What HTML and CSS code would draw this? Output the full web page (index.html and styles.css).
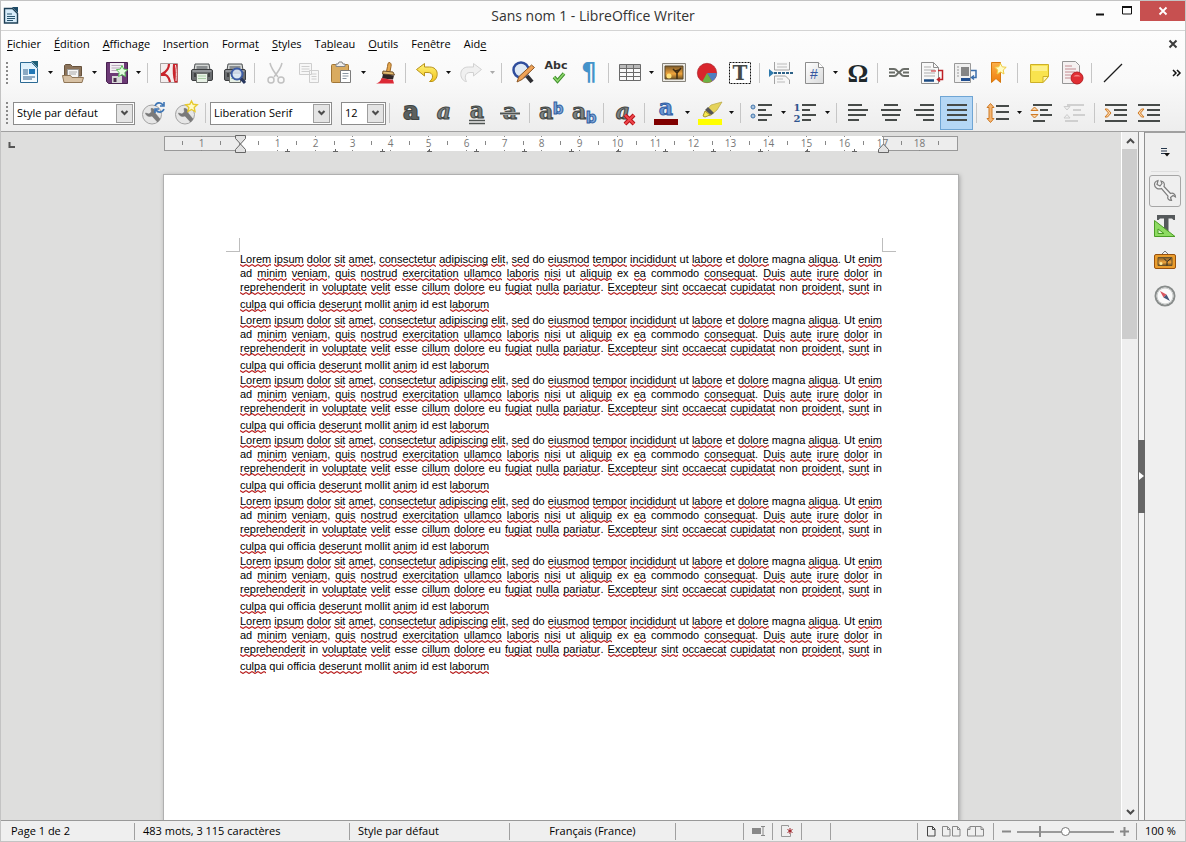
FILE: index.html
```html
<!DOCTYPE html>
<html lang="fr">
<head>
<meta charset="utf-8">
<title>Sans nom 1 - LibreOffice Writer</title>
<link rel="stylesheet" href="styles.css">
</head>
<body>
<svg class="defs" aria-hidden="true">
  <defs>
    <linearGradient id="gGold" x1="0" y1="0" x2="0" y2="1"><stop offset="0" stop-color="#fff27a"/><stop offset="1" stop-color="#f0c419"/></linearGradient>
    <linearGradient id="gOrange" x1="0" y1="0" x2="0" y2="1"><stop offset="0" stop-color="#fcb04a"/><stop offset="1" stop-color="#ee7d0c"/></linearGradient>
    <linearGradient id="gPaper" x1="0" y1="0" x2="1" y2="1"><stop offset="0" stop-color="#ffffff"/><stop offset="1" stop-color="#d9dadb"/></linearGradient>
    <linearGradient id="gBlue" x1="0" y1="0" x2="0" y2="1"><stop offset="0" stop-color="#d8eefb"/><stop offset="1" stop-color="#fafdff"/></linearGradient>
    <linearGradient id="gSky" x1="0" y1="0" x2="0" y2="1"><stop offset="0" stop-color="#7d5a2a"/><stop offset=".6" stop-color="#f0a53c"/><stop offset="1" stop-color="#6f5222"/></linearGradient>
    <symbol id="arrow" viewBox="0 0 7 4"><path d="M1 0h5L3.500 3z"/></symbol>
    <symbol id="chev" viewBox="0 0 9 8"><path d="M1.500 2l3 3 3-3" fill="none" stroke="#4c4c4c" stroke-width="2"/></symbol>
    <symbol id="printer" viewBox="0 0 24 24">
      <path d="M5 3h14l1 6H4z" fill="#d5d8d6" stroke="#4b4e50"/><path d="M6.500 5h11v3h-11z" fill="#8a8e90"/>
      <rect x="1.500" y="8.500" width="21" height="11" rx="1.500" fill="#6a6d70" stroke="#3b3d3f"/>
      <path d="M2.500 10h19" stroke="#b9bdc0"/><rect x="4" y="12" width="16" height="4" fill="#404244"/>
      <path d="M6.500 12.500h11v9h-11z" fill="#e8f1e6" stroke="#6c706d"/><path d="M8 15h8M8 17.500h8" stroke="#a7cda4"/>
    </symbol>
    <symbol id="wrench" viewBox="0 0 24 24"><circle cx="11" cy="13.500" r="9.500" fill="#e6e6e6" stroke="#a3a3a3"/><path d="M4.500 12l3.500 1 2.500-2-.5-3.500c3-.5 4.500 2 4 4.500l5 6-2.500 3-5.500-6c-3 1-6 0-6.500-3z" fill="#7a7a7a" stroke="#6a6a6a" stroke-width=".5"/></symbol>
  </defs>
</svg>
<div class="app">
  <header class="titlebar">
    <svg class="app-icon" width="16" height="18" viewBox="0 0 16 18"><path d="M1.500 1.500h8l5 5v9.500h-13z" fill="#d7ecfa" stroke="#1d3f55" stroke-width="1.400"/><path d="M9 0h6v6z" fill="#1d4a66"/><path d="M4 7h5M4 9.500h8M4 11.500h8M4 13.500h6" stroke="#28546e"/></svg>
    <h1>Sans nom 1 - LibreOffice Writer</h1>
    <div class="window-buttons">
      <button aria-label="Réduire"><svg width="10" height="12" viewBox="0 0 10 12"><path d="M1 9.500h8" stroke="#111" stroke-width="2"/></svg></button>
      <button aria-label="Agrandir"><svg width="12" height="12" viewBox="0 0 12 12"><path d="M1.500 2h9v7h-9z" fill="none" stroke="#111"/><path d="M1 2h10" stroke="#111" stroke-width="2"/></svg></button>
      <button class="close" aria-label="Fermer"><svg width="10" height="10" viewBox="0 0 10 10"><path d="M1.500 1.500l7 7M8.500 1.500l-7 7" stroke="#fff" stroke-width="1.800"/></svg></button>
    </div>
  </header>

  <div class="bars">
    <nav class="menubar">
      <button><u>F</u>ichier</button><button><u>É</u>dition</button><button><u>A</u>ffichage</button><button><u>I</u>nsertion</button><button>Forma<u>t</u></button><button><u>S</u>tyles</button><button>Ta<u>b</u>leau</button><button><u>O</u>utils</button><button>Fe<u>n</u>être</button><button>Aid<u>e</u></button>
      <button class="doc-close" aria-label="Fermer le document"><svg width="10" height="10" viewBox="0 0 10 10"><path d="M1.500 1.500l7 7M8.500 1.500l-7 7" stroke="#3c3c3c" stroke-width="2"/></svg></button>
    </nav>

    <div class="toolbar" role="toolbar" aria-label="Standard">
      <span class="grip"></span>
      <button class="tool" aria-label="Nouveau"><svg viewBox="0 0 24 24"><path d="M3.500 1.500h11l6 6v14h-17z" fill="url(#gBlue)" stroke="#2b6a94"/><path d="M14 0h7v7z" fill="#1d5f78"/><path d="M6 9h5M6 11h5M6 13h5M6 16h12M6 18h9" stroke="#2c5f8a"/><path d="M12 8h6v5h-6z" fill="#2378b6"/></svg></button>
      <button class="drop" aria-label="Options nouveau"><svg><use href="#arrow"/></svg></button>
      <button class="tool" aria-label="Ouvrir"><svg viewBox="0 0 24 24"><path d="M3.500 15V4.500l1-1h5l2 2h9V15z" fill="#8b735a" stroke="#66523d"/><path d="M6.500 8.500h11V17h-11z" fill="#f6f6f6" stroke="#999"/><path d="M8 11h8M8 13h7" stroke="#aaa"/><path d="M1.500 14.500h8l1.500 2h11.500l-1.500 5H3z" fill="#d7c1a4" stroke="#8f7556"/></svg></button>
      <button class="drop" aria-label="Options ouvrir"><svg><use href="#arrow"/></svg></button>
      <button class="tool" aria-label="Enregistrer"><svg viewBox="0 0 24 24"><path d="M1.500 1.500h21v21h-19l-2-2z" fill="#6c3a76" stroke="#47214f"/><path d="M5 2h14v10H5z" fill="#f2eef3"/><path d="M6.500 4.500h11M6.500 7h11M6.500 9.500h11" stroke="#baaabd"/><path d="M7 15h10v7H7z" fill="#d8d8d8"/><path d="M8.500 17h3v4h-3z" fill="#49304d"/><path d="M17 4.500l1.700 3.600 4 .6-2.900 2.800.7 4-3.500-1.900-3.500 1.900.7-4-2.900-2.800 4-.6z" fill="#e4fce0" stroke="#5cc25c"/></svg></button>
      <button class="drop" aria-label="Options enregistrer"><svg><use href="#arrow"/></svg></button>
      <span class="sep"></span>
      <button class="tool" aria-label="Exporter en PDF"><svg viewBox="0 0 24 24"><path d="M3.500 2.500h17v19h-17z" fill="#f4eeee" stroke="#a9a0a0"/><path d="M12 3c0 4-3 8-7 10 4 0 7 3 8 8" fill="none" stroke="#c9242b" stroke-width="2.200"/><path d="M4 12h4v3H4z" fill="#c9242b"/><path d="M16 3h4.500v18.500h-3c-2-6-2-12-1.500-18.500z" fill="#c9242b"/><path d="M18.500 4c1 5 1 10 .5 16" stroke="#f4eeee" fill="none"/></svg></button>
      <button class="tool" aria-label="Imprimer"><svg><use href="#printer"/></svg></button>
      <button class="tool" aria-label="Aperçu"><svg viewBox="0 0 24 24"><use href="#printer" width="24" height="24"/><circle cx="14" cy="13" r="5.500" fill="#dce8f7" fill-opacity=".85" stroke="#3d5ca5" stroke-width="2"/><path d="M18 17.500L22 22" stroke="#27365e" stroke-width="3"/></svg></button>
      <span class="sep"></span>
      <button class="tool off" aria-label="Couper"><svg viewBox="0 0 24 24" fill="none" stroke="#b4b4b4" stroke-width="1.500"><path d="M6 2c1 5 4 9 8 14M18 2c-1 5-4 9-8 14"/><circle cx="7" cy="19" r="3"/><circle cx="17" cy="19" r="3"/></svg></button>
      <button class="tool off" aria-label="Copier"><svg viewBox="0 0 24 24" fill="#f7f7f7" stroke="#c4c4c4"><path d="M2.500 2.500h12v11h-12zM4.500 5.500h8M4.500 8h8M4.500 10.500h8M12.500 9.500h9v12h-9zM14.500 13h5M14.500 15.500h5M14.500 18h5"/></svg></button>
      <button class="tool" aria-label="Coller"><svg viewBox="0 0 24 24"><rect x="1.500" y="3.500" width="17" height="18" rx="1" fill="#d9ab60" stroke="#a27635"/><path d="M6 5.500V3h2l1-2h3l1 2h2v2.500z" fill="#efefef" stroke="#848484"/><path d="M10.500 9.500h10v12h-10z" fill="#fff" stroke="#7d7d7d"/><path d="M12.500 12.500h6M12.500 15h6M12.500 17.500h4" stroke="#8a96a3"/></svg></button>
      <button class="drop" aria-label="Options coller"><svg><use href="#arrow"/></svg></button>
      <button class="tool" aria-label="Cloner le formatage"><svg viewBox="0 0 24 24"><path d="M15 1.500c2 0 2.500 2 2 4l-1 5h-3.500l1-5c.3-2 .5-4 1.500-4z" fill="#e7a94e" stroke="#9c6524"/><path d="M9 10l10 1 1.500 3-12-1z" fill="#e2ba6e" stroke="#73512a"/><path d="M9 13l11 1.500-1 4-11-1z" fill="#312626"/><path d="M7.500 17L19 19l1 3.500H2c3-1 5-2.500 5.500-5.500z" fill="#dc2a36"/></svg></button>
      <span class="sep"></span>
      <button class="tool" aria-label="Annuler"><svg viewBox="0 0 24 24"><path d="M1.500 8.500l8-6v3.500h5c10 0 9.500 12 3 14.500h-3c4.500-3 4-9-1.500-9H9.500V15z" fill="url(#gGold)" stroke="#b8921b"/></svg></button>
      <button class="drop" aria-label="Options annuler"><svg><use href="#arrow"/></svg></button>
      <button class="tool off" aria-label="Rétablir"><svg viewBox="0 0 24 24"><path d="M22.500 8.500l-8-6v3.500h-5C-.5 6 0 18 6.500 20.500h1c-2-3-2-9 3.500-9h3.500V15z" fill="#eee" stroke="#c8c8c8"/></svg></button>
      <button class="drop off" aria-label="Options rétablir"><svg><use href="#arrow"/></svg></button>
      <span class="sep"></span>
      <button class="tool" aria-label="Rechercher"><svg viewBox="0 0 24 24"><circle cx="10" cy="9" r="7.500" fill="#dfe9f4" stroke="#2f4d9c" stroke-width="2.500"/><path d="M16 15l5 6" stroke="#2e2e33" stroke-width="4"/><path d="M20.500 4l3 2.500L11 18.500l-5 2.500 2-5.500z" fill="#efa257" stroke="#8b5726"/></svg></button>
      <button class="tool" aria-label="Orthographe"><svg viewBox="0 0 24 24"><text class="t-abc" x="12" y="8" text-anchor="middle">Abc</text><path d="M10 16l3.500 4L20 12.500" fill="none" stroke="#3f8f2c" stroke-width="3.500"/><path d="M10 16l3.500 4L20 12.500" fill="none" stroke="#8fd76d" stroke-width="1.500"/></svg></button>
      <button class="tool" aria-label="Marques de formatage"><svg viewBox="0 0 24 24"><text class="t-pil" x="12" y="19" text-anchor="middle">¶</text></svg></button>
      <span class="sep"></span>
      <button class="tool" aria-label="Tableau"><svg viewBox="0 0 24 24"><path d="M1.500 3.500h21v16h-21z" fill="#fafafa"/><path d="M1.500 3.500h21v4h-21z" fill="#b9b9b9"/><path d="M1.500 3.500h21v16h-21zM1.500 7.500h21M1.500 11.500h21M1.500 15.500h21M8.500 3.500v16M15.500 3.500v16" fill="none" stroke="#6a6a6a"/></svg></button>
      <button class="drop" aria-label="Options tableau"><svg><use href="#arrow"/></svg></button>
      <button class="tool" aria-label="Image"><svg viewBox="0 0 24 24"><path d="M.5 2.500h23v18H.5z" fill="#eceae4" stroke="#85827a"/><path d="M3 5h18v13H3z" fill="url(#gSky)" stroke="#5c4a2c"/><circle cx="7" cy="15" r="2.500" fill="#ffe27a"/><path d="M15 18v-6l-4-4M15 12l4-5M13 10l4-1" stroke="#3c2a12" stroke-width="1.500" fill="none"/></svg></button>
      <button class="tool" aria-label="Diagramme"><svg viewBox="0 0 24 24"><circle cx="12" cy="12" r="9.700" fill="#d9252c" stroke="#a11d22" stroke-width=".6"/><path d="M12 12h9.700A9.700 9.700 0 0 1 17 20.300z" fill="#4f7fc0"/><path d="M12 12l5 8.300a9.700 9.700 0 0 1-9.700.2z" fill="#6fb244"/></svg></button>
      <button class="tool" aria-label="Zone de texte"><svg viewBox="0 0 24 24"><path d="M1.500 1.500h21v21h-21z" fill="#fff" stroke="#111" stroke-dasharray="2 1"/><text class="t-box" x="12" y="19" text-anchor="middle">T</text></svg></button>
      <span class="sep"></span>
      <button class="tool" aria-label="Saut de page"><svg viewBox="0 0 24 24"><path d="M5.500 1v8h15V1M5.500 23v-8h11l4 4v4" fill="#f7f7f7" stroke="#a2a2a2"/><path d="M8 3h10M8 6h10M8 18h6M8 21h8" stroke="#bbb"/><path d="M0 8l5 4-5 4z" fill="#2f7aad"/><path d="M5 12h19" stroke="#2d6288" stroke-width="2" stroke-dasharray="3 1"/></svg></button>
      <button class="tool" aria-label="Champ"><svg viewBox="0 0 24 24"><path d="M3.500 1.500h13l5 5v16h-18z" fill="url(#gPaper)" stroke="#8d8d8d"/><path d="M16.500 1.500v5h5" fill="#fff" stroke="#8d8d8d"/><text class="t-num" x="12" y="18" text-anchor="middle">#</text></svg></button>
      <button class="drop" aria-label="Options champ"><svg><use href="#arrow"/></svg></button>
      <button class="tool" aria-label="Caractère spécial"><svg viewBox="0 0 24 24"><text class="t-omega" x="12" y="21" text-anchor="middle">Ω</text></svg></button>
      <span class="sep"></span>
      <button class="tool" aria-label="Hyperlien"><svg viewBox="0 0 24 24" fill="none" stroke="#6b6e69" stroke-width="2"><path d="M2 8h5c3 0 3 3 5 3.500 2-.5 2-3.500 5-3.500h5M2 15h5c3 0 3-3 5-3.500 2 .5 2 3.500 5 3.500h5M2 11.500h6M16 11.500h6"/></svg></button>
      <button class="tool" aria-label="Note de bas de page"><svg viewBox="0 0 24 24"><path d="M1.500 1.500h12l5 5v16h-17z" fill="#f8f8f8" stroke="#8f8f8f"/><path d="M13.500 1.500v5h5" fill="none" stroke="#8f8f8f"/><path d="M4 6h7M4 9h11M4 12h11M4 15h11" stroke="#adadad"/><path d="M11 10h5" stroke="#d02028"/><path d="M4 19.500h10" stroke="#1c4c83" stroke-width="2.500"/><path d="M18 9.500h4.500v9H18m2-2l-2.500 2 2.500 2" fill="none" stroke="#be2026" stroke-width="1.500"/></svg></button>
      <button class="tool" aria-label="Note de fin"><svg viewBox="0 0 24 24"><path d="M1.500 2.500h16v19h-16z" fill="#f0f0f0" stroke="#999"/><path d="M4 6h2M4 9h2M4 12h2M4 15h2" stroke="#999"/><path d="M8 6h8v9H8z" fill="#858585"/><path d="M8 18.500h9" stroke="#214f90" stroke-width="3"/><path d="M18 9.500h5v7h-4m2-2l-2.500 2 2.500 2" fill="none" stroke="#3b6eac" stroke-width="1.500"/></svg></button>
      <button class="tool" aria-label="Repère de texte"><svg viewBox="0 0 24 24"><path d="M5.500 1.500h9v20l-4.500-4-4.500 4z" fill="url(#gOrange)" stroke="#d6780e"/><path d="M14.500 2.500l1.700 3.300 4 .5-3 2.700.8 4-3.500-2-3.500 2 .8-4-3-2.700 4-.5z" fill="#fffbc4" stroke="#f0cd45"/></svg></button>
      <span class="sep"></span>
      <button class="tool" aria-label="Commentaire"><svg viewBox="0 0 24 24"><path d="M3.500 3.500h18v12l-5.500 6H3.500z" fill="#f9e34e" stroke="#cdb028"/><path d="M5 5h15v5H5z" fill="#fdf08a"/><path d="M16 21.500v-6h5.500z" fill="#fff6b0" stroke="#cdb028"/></svg></button>
      <button class="tool" aria-label="Suivi des modifications"><svg viewBox="0 0 24 24"><path d="M2.500.5h13l4 4v18h-17z" fill="#f5f1f1" stroke="#969696"/><path d="M5 5h7M5 8h11M5 11h10M5 14h6M5 17h5" stroke="#c38a90"/><circle cx="17" cy="17" r="6" fill="#e02e33" stroke="#b61d22"/><path d="M13.500 15.500a4 3.500 0 0 1 7 0" fill="#f4807f"/></svg></button>
      <span class="sep"></span>
      <button class="tool" aria-label="Ligne"><svg viewBox="0 0 24 24"><path d="M3 21L21 3" stroke="#1c1c1c" stroke-width="1.200"/></svg></button>
      <button class="more" aria-label="Plus"><svg width="9" height="8" viewBox="0 0 9 8"><path d="M1 1l3 3-3 3M5 1l3 3-3 3" fill="none" stroke="#111" stroke-width="1.500"/></svg></button>
    </div>

    <div class="toolbar format" role="toolbar" aria-label="Formatage">
      <span class="grip"></span>
      <label class="combo wide"><select aria-label="Style de paragraphe"><option>Style par défaut</option></select><span class="combo-arrow"><svg><use href="#chev"/></svg></span></label>
      <button class="tool" aria-label="Actualiser le style"><svg viewBox="0 0 24 24"><use href="#wrench" width="24" height="24"/><path d="M14 5c1.500-4 6-4 8-1M23 1v4h-4M23 8c-1.500 4-6 4-8 1M14 12V8h4" fill="none" stroke="#3f76b5" stroke-width="1.600"/></svg></button>
      <button class="tool" aria-label="Nouveau style"><svg viewBox="0 0 24 24"><use href="#wrench" width="24" height="24"/><path d="M17.500 0l1.700 3.300 4 .5-3 2.700.8 4-3.500-2-3.500 2 .8-4-3-2.700 4-.5z" fill="#fffbc8" stroke="#e7ca2f" stroke-width="1.400"/></svg></button>
      <span class="sep"></span>
      <label class="combo wide"><select aria-label="Police"><option>Liberation Serif</option></select><span class="combo-arrow"><svg><use href="#chev"/></svg></span></label>
      <label class="combo small"><select aria-label="Taille"><option>12</option></select><span class="combo-arrow"><svg><use href="#chev"/></svg></span></label>
      <span class="sep"></span>
      <button class="tool" aria-label="Gras"><svg viewBox="0 0 24 24"><text class="t-a heavy" x="12" y="18" text-anchor="middle">a</text></svg></button>
      <button class="tool" aria-label="Italique"><svg viewBox="0 0 24 24"><text class="t-a slant" x="12" y="18" text-anchor="middle">a</text></svg></button>
      <button class="tool" aria-label="Souligné"><svg viewBox="0 0 24 24"><text class="t-a" x="12" y="17" text-anchor="middle">a</text><path d="M4 19.500h16M4 22.500h16" stroke="#4f5452" stroke-width="1.500"/></svg></button>
      <button class="tool" aria-label="Barré"><svg viewBox="0 0 24 24"><text class="t-a" x="12" y="18" text-anchor="middle">a</text><path d="M2 12.500h20" stroke="#f5f5f5" stroke-width="3"/><path d="M2 12.500h20" stroke="#4f5452" stroke-width="2"/></svg></button>
      <span class="sep"></span>
      <button class="tool" aria-label="Exposant"><svg viewBox="0 0 24 24"><text class="t-a" x="7" y="18" text-anchor="middle">a</text><text class="t-b" x="19" y="13" text-anchor="middle">b</text></svg></button>
      <button class="tool" aria-label="Indice"><svg viewBox="0 0 24 24"><text class="t-a" x="7" y="18" text-anchor="middle">a</text><text class="t-b" x="19" y="22" text-anchor="middle">b</text></svg></button>
      <span class="sep"></span>
      <button class="tool" aria-label="Effacer le formatage"><svg viewBox="0 0 24 24"><text class="t-a slant" x="10" y="18" text-anchor="middle">a</text><path d="M12 14l9 9M21 14l-9 9" stroke="#b31419" stroke-width="4"/><path d="M12 14l9 9M21 14l-9 9" stroke="#ef444a" stroke-width="2"/></svg></button>
      <span class="sep"></span>
      <button class="tool" aria-label="Couleur de police"><svg viewBox="0 0 24 24"><text class="t-a blue" x="12" y="14" text-anchor="middle">a</text><path d="M0 18h24v6H0z" fill="#800000"/></svg></button>
      <button class="drop" aria-label="Options couleur"><svg><use href="#arrow"/></svg></button>
      <button class="tool" aria-label="Surlignage"><svg viewBox="0 0 24 24"><path d="M24 1L13 4l-6 7 5 4 7-6z" fill="#e5d35b" stroke="#b7a640" stroke-width=".7"/><path d="M10 6l6 6-3 2-6-5z" fill="#555"/><path d="M7 10l5 4-5 2-2-1z" fill="#f6e84e" stroke="#a4932c"/><path d="M0 18h24v6H0z" fill="#ffff00"/></svg></button>
      <button class="drop" aria-label="Options surlignage"><svg><use href="#arrow"/></svg></button>
      <span class="sep"></span>
      <button class="tool" aria-label="Puces"><svg viewBox="0 0 24 24"><circle cx="3" cy="6" r="2" fill="#aac4de" stroke="#4275aa"/><circle cx="3" cy="15" r="2" fill="#aac4de" stroke="#4275aa"/><path class="bars-ink" d="M8 4h14M8 9h8M8 14h14M8 19h9"/></svg></button>
      <button class="drop" aria-label="Options puces"><svg><use href="#arrow"/></svg></button>
      <button class="tool" aria-label="Numérotation"><svg viewBox="0 0 24 24"><text class="t-list" x="3" y="10" text-anchor="middle">1</text><text class="t-list" x="3" y="21" text-anchor="middle">2</text><path class="bars-ink" d="M8 4h14M8 9h8M8 14h14M8 19h9"/></svg></button>
      <button class="drop" aria-label="Options numérotation"><svg><use href="#arrow"/></svg></button>
      <span class="sep"></span>
      <button class="tool" aria-label="Aligner à gauche"><svg viewBox="0 0 24 24"><path class="bars-ink" d="M2 4h14M2 9h20M2 14h18M2 19h11"/></svg></button>
      <button class="tool" aria-label="Centrer"><svg viewBox="0 0 24 24"><path class="bars-ink" d="M5 4h14M2 9h20M3 14h18M6 19h12"/></svg></button>
      <button class="tool" aria-label="Aligner à droite"><svg viewBox="0 0 24 24"><path class="bars-ink" d="M8 4h14M2 9h20M4 14h18M11 19h11"/></svg></button>
      <button class="tool pressed" aria-label="Justifié" aria-pressed="true"><svg viewBox="0 0 24 24"><path class="bars-ink" d="M2 4h20M2 9h20M2 14h20M2 19h20"/></svg></button>
      <span class="sep"></span>
      <button class="tool" aria-label="Interligne"><svg viewBox="0 0 24 24"><path d="M4.500 2.500l3.500 4H6v11h2l-3.500 4-3.500-4h2v-11H1z" fill="#f5b673" stroke="#cf7a25"/><path class="bars-ink" d="M10 5h13M10 11h13M10 18h13"/></svg></button>
      <button class="drop" aria-label="Options interligne"><svg><use href="#arrow"/></svg></button>
      <button class="tool" aria-label="Augmenter l'espacement"><svg viewBox="0 0 24 24"><path d="M4.500 6L8 9.500H1zM4.500 17L8 13.500H1z" fill="#fbd3a4" stroke="#cf7a25"/><path class="bars-ink" d="M3 4h19M10 9h8M10 14h12M3 20h12"/></svg></button>
      <button class="tool off" aria-label="Réduire l'espacement"><svg viewBox="0 0 24 24"><path d="M4 9L7 5.500H1zM4 13.500L7 17H1z" fill="#eee" stroke="#c4c4c4"/><path class="bars-ink faint" d="M4 4h17M10 9h8M10 14h12M2 20h13"/></svg></button>
      <span class="sep"></span>
      <button class="tool" aria-label="Augmenter le retrait"><svg viewBox="0 0 24 24"><path class="bars-ink" d="M1 4h22M10 9h13M10 14h13M1 20h22"/><path d="M1 8l3.500 4L1 16h2.500L7 12 3.500 8z" fill="#fbd3a4" stroke="#cf7a25"/></svg></button>
      <button class="tool" aria-label="Diminuer le retrait"><svg viewBox="0 0 24 24"><path class="bars-ink" d="M1 4h22M10 9h13M10 14h13M1 20h22"/><path d="M7 8l-3.500 4L7 16H4.500L1 12l3.500-4z" fill="#fbd3a4" stroke="#cf7a25"/></svg></button>
    </div>
  </div>

  <main class="workspace">
    <section class="canvas">
      <div class="ruler-row">
        <svg class="tab-kind" width="8" height="8" viewBox="0 0 8 8"><path d="M1.500 1v5h5.500" fill="none" stroke="#555" stroke-width="2"/></svg>
        <svg class="ruler" id="ruler" width="796" height="20" viewBox="0 0 796 20" role="img" aria-label="Règle"></svg>
      </div>
      <article class="page">
        <div class="corners"><span class="corner left"></span><span class="corner right"></span></div>
        <div class="text" id="text"></div>
      </article>
    </section>
    <div class="scrollbar">
      <button aria-label="Défiler vers le haut"><svg width="9" height="8" viewBox="0 0 9 8"><path d="M1 6l3.500-3.500L8 6" fill="none" stroke="#4c4c4c" stroke-width="2"/></svg></button>
      <div class="track"><div class="thumb"></div></div>
      <button aria-label="Défiler vers le bas"><svg width="9" height="8" viewBox="0 0 9 8"><path d="M1 2l3.500 3.500L8 2" fill="none" stroke="#4c4c4c" stroke-width="2"/></svg></button>
    </div>
    <div class="splitter"><button aria-label="Masquer le volet"><svg width="5" height="8" viewBox="0 0 5 8"><path d="M0 0l5 4-5 4z" fill="#fff"/></svg></button></div>
    <aside class="sidebar">
      <button class="side-menu" aria-label="Paramètres du volet"><svg width="10" height="10" viewBox="0 0 10 10"><path d="M1 1.500h6M1 4h6M1 6.500h5" stroke="#26374d"/><path d="M4 6h6L7 9.500z" fill="#111"/></svg></button>
      <button class="side active" aria-label="Propriétés"><svg viewBox="0 0 24 24"><path d="M5 1.500L4 5.500l3 1.500 2-2.500-1-2.500c3 .5 4 3 3 5.500l6.500 7c3-1 5 1 5 3.500l-2.500-1.500-2.500 2 1 3c-3 0-4.500-2-3.500-4.500L8.500 9.500C5 11 1.500 8.500 1.500 5.500 1.500 4 3 2 5 1.500z" fill="#f4f4f4" stroke="#7d7d7d" stroke-width="1.200"/></svg></button>
      <button class="side" aria-label="Styles"><svg viewBox="0 0 24 24"><path d="M4 1h18v5h-1.500L19 4.500h-3.500V18c0 2 1 2 2 2.500V22H9v-1.500c1-.5 2-.5 2-2.500V4.500H7L5.500 6H4z" fill="#55595b"/><path d="M1.500 6.500v16H22z" fill="#8edb62" stroke="#4b9c26"/><path d="M5 15v4.500h6z" fill="#d9f5c8" stroke="#4b9c26"/></svg></button>
      <button class="side" aria-label="Galerie"><svg viewBox="0 0 24 24"><path d="M9 5l3-3 3 3" fill="none" stroke="#777"/><rect x="1.500" y="5.500" width="21" height="14" rx="1.500" fill="#ea9d2d" stroke="#98510f"/><path d="M5 8.500h14v8H5z" fill="url(#gSky)" stroke="#68532d"/><circle cx="8" cy="14.500" r="1.500" fill="#ffeb9b"/><path d="M14 16.500v-4l-3-3M14 12.500l4-3" stroke="#29261d" fill="none"/></svg></button>
      <button class="side" aria-label="Navigateur"><svg viewBox="0 0 24 24"><circle cx="12" cy="12" r="9.500" fill="#fafafa" stroke="#888c8b" stroke-width="2"/><circle cx="12" cy="12" r="8" fill="none" stroke="#c9cccb"/><path d="M7 7l6.500 3.500-3 3z" fill="#d95560"/><path d="M17 17l-3.500-6.500-3 3z" fill="#465779"/></svg></button>
    </aside>
  </main>

  <footer class="status">
    <span class="cell page-no">Page 1 de 2</span>
    <span class="cell words">483 mots, 3 115 caractères</span>
    <span class="cell style">Style par défaut</span>
    <span class="cell lang">Français (France)</span>
    <span class="cell blank"></span>
    <span class="cell icon"><svg width="13" height="12" viewBox="0 0 13 12"><path d="M0 3h9v6H0z" fill="#888"/><path d="M9 1.500h4M9 10.500h4M11 1.500v9" stroke="#888"/></svg></span>
    <span class="cell icon"><svg width="12" height="12" viewBox="0 0 12 12"><path d="M7.500.5h-7v11h9V9M7.500.5V2" fill="none" stroke="#999"/><path d="M9 3v6M6.500 4.500l5 3M11.500 4.500l-5 3" stroke="#9c1c22"/></svg></span>
    <span class="cell icon"></span>
    <span class="cell gap"></span>
    <span class="cell views">
      <button aria-label="Page simple"><svg width="9" height="11" viewBox="0 0 9 11"><path d="M.5.5h5l2.500 2.500v7H.5zM5.500.5v3H8" fill="none" stroke="#444"/></svg></button>
      <button aria-label="Plusieurs pages"><svg width="19" height="11" viewBox="0 0 19 11"><path d="M.5.5h5l2.500 2.500v7H.5zM5.500.5v3H8M10.500.5h5l2.500 2.500v7h-7.500zM15.500.5v3H18" fill="none" stroke="#888"/></svg></button>
      <button aria-label="Livre"><svg width="17" height="11" viewBox="0 0 17 11"><path d="M8.500.5H3L.5 3v7h8zM3 .5v3H.5M8.500.5H14L16.500 3v7h-8zM14 .5v3h2.500" fill="none" stroke="#888"/></svg></button>
    </span>
    <span class="cell zoom">
      <button aria-label="Zoom arrière"><svg width="9" height="9" viewBox="0 0 9 9"><path d="M0 4.500h9" stroke="#888" stroke-width="2"/></svg></button>
      <input type="range" min="0" max="100" value="50" aria-label="Zoom">
      <button aria-label="Zoom avant"><svg width="9" height="9" viewBox="0 0 9 9"><path d="M0 4.500h9M4.500 0v9" stroke="#888" stroke-width="2"/></svg></button>
    </span>
    <span class="cell percent">100 %</span>
  </footer>
</div>
<script src="script.js"></script>
</body>
</html>
```
FILE: styles.css
```css
* { box-sizing: border-box; }
body {
  margin: 0;
  font: 11px/16px "Open Sans", "Noto Sans", sans-serif;
  color: #000;
}
button {
  margin: 0;
  padding: 0;
  border: 0;
  background: none;
  font: inherit;
  color: inherit;
}
svg { display: block; flex: none; overflow: visible; }
.defs { position: absolute; width: 0; height: 0; }
.app {
  display: flex;
  flex-direction: column;
  height: 100vh;
  border: 1px solid #c3c3c3;
  background: #efefef;
  overflow: hidden;
}

/* Title bar */
.titlebar {
  display: grid;
  grid-template-columns: 128px 1fr 128px;
  align-items: center;
  height: 30px;
  flex: none;
  background: #fcfcfc;
  border-bottom: 1px solid #d4d4d4;
}
.app-icon { margin-left: 2px; }
h1 {
  margin: 0;
  font-size: 14px;
  line-height: 20px;
  font-weight: 400;
  text-align: center;
  color: #333;
}
.window-buttons { display: flex; align-self: start; justify-content: flex-end; height: 20px; }
.window-buttons button { width: 27px; display: flex; align-items: center; justify-content: center; }
.window-buttons .close { width: 45px; background: #c75050; }

/* Menu and tool bars */
.bars {
  flex: none;
  padding-bottom: 1px;
  background: linear-gradient(#fdfdfd, #f9f9f9 50%, #ededed);
  border-bottom: 1px solid #a0a0a0;
}
.menubar { display: flex; align-items: center; gap: 13px; height: 25px; padding: 0 7px 0 6px; }
.menubar u { text-underline-offset: 2px; }
.doc-close { margin-left: auto; }
.toolbar { display: flex; align-items: center; height: 34px; padding-right: 4px; }
.toolbar + .toolbar { margin-top: 6px; }
.grip {
  width: 2px;
  height: 23px;
  margin: 0 4px 0 5px;
  background: repeating-linear-gradient(#8a8a8a 0 2px, transparent 2px 4px);
}
.format .grip { margin-right: 5px; }
.format .combo + .tool { margin-left: 1px; }
.tool { display: flex; align-items: center; justify-content: center; width: 33px; height: 34px; flex: none; }
.tool svg { width: 24px; height: 24px; }
.tool.off { opacity: 0.8; }
.tool.pressed { background: #b5d7f5; border: 1px solid #6fa5d4; }
.drop { width: 11px; height: 34px; display: flex; align-items: center; justify-content: center; flex: none; }
.drop svg { width: 7px; height: 4px; fill: #111; }
.drop.off svg { fill: #aaa; }
.sep { width: 1px; height: 20px; margin: 0 4px 0 3px; background: #c6c6c6; flex: none; }
.more { margin-left: auto; }
.bars-ink { stroke: #474b49; stroke-width: 2; fill: none; }
.bars-ink.faint { stroke: #c8c8c8; }

.combo {
  display: flex;
  height: 23px;
  flex: none;
  border: 1px solid #8c8c8c;
  background: #fff;
  position: relative;
}
.combo.wide { width: 122px; }
.combo.small { width: 45px; margin-left: 9px; }
.combo select {
  appearance: none;
  width: 100%;
  padding: 0 18px 0 3px;
  border: 0;
  background: none;
  font: inherit;
  color: #000;
}
.combo-arrow {
  position: absolute;
  top: 1px;
  right: 1px;
  bottom: 1px;
  width: 17px;
  display: flex;
  align-items: center;
  justify-content: center;
  background: #e4e4e4;
  border: 1px solid #9e9e9e;
  pointer-events: none;
}
.combo-arrow svg { width: 9px; height: 8px; }

/* Lettering inside icons */
.t-abc { font: bold 11px "DejaVu Sans", sans-serif; fill: #333; }
.t-pil { font: bold 24px "DejaVu Sans", sans-serif; fill: #4493ca; }
.t-box { font: bold 20px "DejaVu Serif", serif; fill: #474b49; }
.t-num { font: 14px "Liberation Sans", sans-serif; fill: #3656a0; }
.t-omega { font: bold 26px "Liberation Serif", serif; fill: #20282b; }
.t-a { font: bold 22px "DejaVu Serif", serif; fill: #7d8280; stroke: #3f4442; stroke-width: 1px; }
.t-a.heavy { font-size: 24px; fill: #5c615f; stroke-width: 2px; paint-order: stroke; }
.t-a.slant { font-style: italic; }
.t-a.blue { fill: #6b95d2; stroke: #2f5da5; }
.t-b { font: bold 15px "DejaVu Sans", sans-serif; fill: #82a9da; stroke: #315f9f; stroke-width: 1px; }
.t-list { font: bold 10px "DejaVu Serif", serif; fill: #2f548e; }

/* Work area */
.workspace { display: flex; flex: 1; min-height: 0; background: #dededd; }
.canvas { flex: 1; min-width: 0; overflow: hidden; display: flex; flex-direction: column; align-items: center; }
.ruler-row { display: grid; grid-template-columns: 1fr auto 1fr; width: 100%; padding-top: 3px; flex: none; }
.tab-kind { margin: 6px 0 0 7px; }
.page {
  width: 796px;
  flex: none;
  min-height: 1124px;
  margin-top: 19px;
  padding-top: 63px;
  background: #fff;
  border: 1px solid #b0b0b0;
  box-shadow: 1px 1px 4px #a8a8a8;
}
.corners { display: flex; justify-content: space-between; padding: 0 62px; }
.corner { width: 14px; height: 14px; border-bottom: 1px solid #bdbdbd; }
.corner.left { border-right: 1px solid #bdbdbd; }
.corner.right { border-left: 1px solid #bdbdbd; }
.text { padding: 0 76px; font: 11px/14px "Liberation Sans", Arial, sans-serif; color: #000; }
.text p { margin: 0; }
.text p:nth-child(3n + 1) { margin-bottom: 1px; }
.line { display: block; height: 14px; text-align: justify; text-align-last: justify; white-space: nowrap; }
.line:last-child { text-align-last: left; height: 18px; line-height: 20px; }
.miss {
  display: inline-block;
  line-height: 14px;
  padding-bottom: 1px;
  background: url("data:image/svg+xml,%3Csvg xmlns='http://www.w3.org/2000/svg' width='6' height='3'%3E%3Cpath d='M0 .5l3 2 3-2' fill='none' stroke='%23b82020' stroke-width='1.1'/%3E%3C/svg%3E") repeat-x 0 100%;
}

.ruler .num { font: 10px "Open Sans", sans-serif; fill: #777; }
.ruler .tick { stroke: #888; }
.ruler .tab { stroke: #666; fill: none; }
.ruler .margin { fill: #ededed; stroke: #999; }
.ruler .marker { fill: #e2e2e2; stroke: #666; }

.scrollbar { width: 17px; flex: none; display: flex; flex-direction: column; background: #efefef; border-left: 1px solid #fff; }
.scrollbar button { height: 17px; display: flex; align-items: center; justify-content: center; }
.track { flex: 1; padding: 0 1px 0 0; }
.thumb { height: 29%; background: #cdcdcd; }
.splitter {
  width: 7px;
  flex: none;
  display: flex;
  align-items: center;
  border: 1px solid #8f8f8f;
  border-width: 0 1px;
  background: #f6f6f6;
}
.splitter button { width: 5px; height: 71px; background: #666; display: flex; align-items: center; outline: 1px solid #666; }
.sidebar {
  width: 40px;
  flex: none;
  display: flex;
  flex-direction: column;
  align-items: center;
  gap: 3px;
  border-top: 1px solid #a0a0a0;
  background: #efefef;
}
.side-menu { width: 28px; height: 39px; display: flex; align-items: center; justify-content: center; border-bottom: 1px solid #dedede; }
.side { width: 32px; height: 32px; display: flex; align-items: center; justify-content: center; border: 1px solid transparent; border-radius: 3px; }
.side svg { width: 24px; height: 24px; }
.side.active { border-color: #a6a6a6; }

/* Status bar */
.status { display: flex; align-items: center; height: 21px; flex: none; border-top: 1px solid #999; }
.cell { flex: 1 1 0; height: 17px; display: flex; align-items: center; padding-left: 8px; border-right: 1px solid #a0a0a0; white-space: nowrap; }
.page-no { flex-grow: 123; padding-left: 10px; }
.words { flex-grow: 206; }
.style { flex-grow: 151; }
.lang { flex-grow: 165; padding: 0; justify-content: center; }
.blank { flex-grow: 59; }
.icon { flex: 0 0 29px; padding: 0; justify-content: center; }
.gap { flex: 0 0 87px; }
.views { flex: 0 0 76px; padding: 0; justify-content: center; gap: 6px; }
.zoom { flex: 0 0 143px; padding: 0; justify-content: center; gap: 6px; }
.percent { flex: 0 0 48px; border-right: 0; }
.zoom input {
  appearance: none;
  width: 97px;
  height: 11px;
  margin: 0;
  background:
    linear-gradient(#8c8c8c, #8c8c8c) 22px 0 / 2px 11px no-repeat,
    linear-gradient(#9a9a9a, #9a9a9a) 0 5px / 100% 2px no-repeat;
}
.zoom input::-webkit-slider-thumb {
  appearance: none;
  width: 9px;
  height: 9px;
  border: 1px solid #777;
  border-radius: 50%;
  background: #fff;
}
```
FILE: script.js
```js
// Words followed by * are unknown to the spell checker.
const lines = [
  "Lorem* ipsum* dolor* sit* amet*, consectetur* adipiscing* elit*, sed* do eiusmod* tempor* incididunt* ut labore* et dolore* magna aliqua*. Ut enim*",
  "ad minim* veniam*, quis* nostrud* exercitation* ullamco* laboris* nisi* ut aliquip* ex ea* commodo consequat*. Duis* aute* irure* dolor* in",
  "reprehenderit* in voluptate* velit* esse cillum* dolore* eu fugiat* nulla* pariatur*. Excepteur* sint* occaecat* cupidatat* non proident*, sunt* in",
  "culpa* qui officia deserunt* mollit anim* id est laborum*"
];
const markup = lines
  .map(l => '<span class="line">' + l.replace(/(\w+)\*/g, '<span class="miss">$1</span>') + "</span>")
  .join("");
document.getElementById("text").innerHTML = Array(7).fill("<p>" + markup + "</p>").join("");

// Horizontal ruler, in centimetres from the left margin.
const cm = 37.8, zero = 77, end = 720;
let r = '<rect x="1" y="1" width="794" height="15" fill="#fff"/>';
r += `<rect class="margin" x="1.5" y="1.5" width="${zero - 2}" height="14"/>`;
r += `<rect class="margin" x="${end}.5" y="1.5" width="74" height="14"/>`;
for (let h = -3; h <= 37; h++) {
  const x = Math.round(zero + h * cm / 2) - 0.5;
  if (h % 2) {
    r += `<path class="tick" d="M${x} 6v4"/>`;
  } else if (h !== 0) {
    r += `<path class="tick" d="M${x} 1v1M${x} 15v1"/>`;
    r += `<text class="num" x="${x}" y="12" text-anchor="middle">${Math.abs(h / 2)}</text>`;
  }
}
for (let t = 1; t <= 13; t++) {
  const x = Math.round(zero + t * 1.25 * cm) + 0.5;
  r += `<path class="tab" d="M${x} 14v3M${x - 2.5} 16.500h5"/>`;
}
r += `<path class="marker" d="M${zero - 5}.5.5h10v3l-5 5.500-5-5.500zM${zero - 5}.5 17.500h10v-3l-5-5.500-5 5.500z"/>`;
r += `<path class="marker" d="M${end - 5}.5 17.500h10v-3l-5-5.500-5 5.500z"/>`;
document.getElementById("ruler").innerHTML = r;
```
